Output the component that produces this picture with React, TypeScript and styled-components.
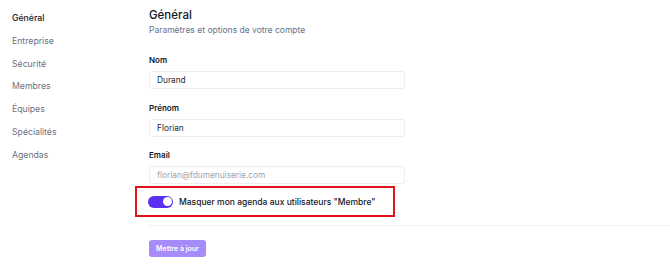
import React, { useState } from "react";
import styled, { createGlobalStyle } from "styled-components";

const Global = createGlobalStyle`
  html, body { margin: 0; padding: 0; background: #ffffff; }
  body { font-family: Inter, "Noto Sans", sans-serif; color: #111827; }
  * { box-sizing: border-box; }
`;

const Page = styled.div`
  display: flex;
  width: 670px;
  height: 273px;
  overflow: hidden;
  background: #fff;
`;

const Sidebar = styled.nav`
  width: 149px;
  flex: none;
  padding: 12px 0 0 12px;
  display: flex;
  flex-direction: column;
  gap: 10px;
`;

const NavItem = styled.a<{ $active?: boolean }>`
  font-size: 8.7px;
  line-height: 12.8px;
  color: ${(p) => (p.$active ? "#111827" : "#6b7280")};
  font-weight: ${(p) => (p.$active ? 500 : 400)};
  text-decoration: none;
`;

const Main = styled.main`
  flex: 1;
  padding-top: 8px;
  display: flex;
  flex-direction: column;
`;

const Title = styled.h1`
  margin: 0;
  font-size: 11.5px;
  line-height: 14px;
  font-weight: 500;
  color: #111827;
`;

const Subtitle = styled.p`
  margin: 2px 0 0;
  font-size: 8.5px;
  line-height: 12px;
  color: #64748b;
`;

const Form = styled.div`
  width: 256px;
  margin-top: 18px;
  display: flex;
  flex-direction: column;
  gap: 12.7px;
`;

const Field = styled.div`
  display: flex;
  flex-direction: column;
  gap: 5px;
`;

const Label = styled.label`
  font-size: 8px;
  line-height: 12px;
  font-weight: 600;
  color: #111827;
`;

const Input = styled.input<{ $muted?: boolean }>`
  height: 18px;
  width: 100%;
  border: 1px solid #eceef1;
  border-radius: 3px;
  padding: 0 7px;
  font-family: inherit;
  font-size: 8.3px;
  color: ${(p) => (p.$muted ? "#9ca3af" : "#1f2937")};
  background: #fff;
  outline: none;
`;

const Highlight = styled.div`
  margin: 2px 0 0 -14px;
  width: 260px;
  height: 31px;
  border: 2px solid #e0151c;
  display: flex;
  align-items: center;
  padding-left: 11px;
  gap: 6px;
`;

const Toggle = styled.button<{ $on: boolean }>`
  width: 25px;
  height: 12px;
  border-radius: 6px;
  border: none;
  padding: 0 1.5px;
  background: ${(p) => (p.$on ? "#5a31f0" : "#d1d5db")};
  display: flex;
  align-items: center;
  justify-content: ${(p) => (p.$on ? "flex-end" : "flex-start")};
  cursor: pointer;
`;

const Knob = styled.span`
  width: 9px;
  height: 9px;
  border-radius: 50%;
  background: #fff;
`;

const ToggleText = styled.span`
  font-size: 8.5px;
  line-height: 12px;
  font-weight: 500;
  color: #111827;
  white-space: nowrap;
`;

const Divider = styled.hr`
  margin: 8px 0 0;
  border: none;
  border-top: 1px solid #eef0f2;
  width: 100%;
`;

const Submit = styled.button`
  margin-top: 14px;
  width: 57px;
  height: 17px;
  border: none;
  border-radius: 3px;
  background: #a58cf8;
  color: #fff;
  font-family: inherit;
  font-size: 7px;
  font-weight: 600;
  padding: 0;
`;

const navItems = ["Général", "Entreprise", "Sécurité", "Membres", "Équipes", "Spécialités", "Agendas"];

export default function App() {
  const [on, setOn] = useState(true);
  return (
    <Page>
      <Global />
      <Sidebar>
        {navItems.map((n, i) => (
          <NavItem key={n} $active={i === 0}>{n}</NavItem>
        ))}
      </Sidebar>
      <Main>
        <Title>Général</Title>
        <Subtitle>Paramètres et options de votre compte</Subtitle>
        <Form>
          <Field>
            <Label>Nom</Label>
            <Input defaultValue="Durand" />
          </Field>
          <Field>
            <Label>Prénom</Label>
            <Input defaultValue="Florian" />
          </Field>
          <Field>
            <Label>Email</Label>
            <Input $muted defaultValue="florian@fdumenuiserie.com" disabled />
          </Field>
        </Form>
        <Highlight>
          <Toggle $on={on} onClick={() => setOn(!on)}>
            <Knob />
          </Toggle>
          <ToggleText>Masquer mon agenda aux utilisateurs "Membre"</ToggleText>
        </Highlight>
        <Divider />
        <div>
          <Submit>Mettre à jour</Submit>
        </div>
      </Main>
    </Page>
  );
}
